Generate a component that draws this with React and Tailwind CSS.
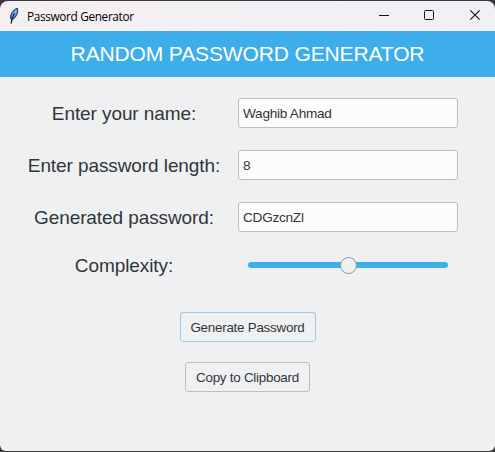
import React from "react";

function Feather() {
  return (
    <svg width="16" height="18" viewBox="0 0 16 18" className="block">
      <path d="M4.6 11.5C4 7.5 6.8 2.8 11.4 1.2C12.4 5 11 9.8 6.2 12.8Z" fill="#4a90dc" stroke="#17202c" strokeWidth="0.9" />
      <path d="M6.8 9.5L10.2 3.4" stroke="#7fb8f2" strokeWidth="1.8" fill="none" />
      <path d="M8.4 6.5C6.4 10 5.3 12.5 5.1 16.8" stroke="#0b0d10" strokeWidth="1.1" fill="none" />
    </svg>
  );
}

function TitleBar() {
  return (
    <div className="flex h-[30px] shrink-0 items-center rounded-t-lg bg-gradient-to-r from-[#f4f0f2] to-[#f2f0f7] pl-[6px]">
      <Feather />
      <span className="ml-[5px] font-['Open_Sans',sans-serif] text-[11.8px] leading-4 tracking-[-0.34px] whitespace-nowrap text-black">
        Password Generator
      </span>
      <svg width="102" height="12" viewBox="0 0 102 12" className="mr-[14px] mb-[2px] ml-auto block" fill="none" stroke="#111">
        <path d="M0 6.5H10" shapeRendering="crispEdges" />
        <rect x="45.5" y="1.5" width="9" height="9" rx="1" />
        <path d="M91.3 1.3L100.7 10.7M100.7 1.3L91.3 10.7" strokeWidth="1.1" />
      </svg>
    </div>
  );
}

function Label({ children }) {
  return (
    <div className="pt-px text-center text-[19px] leading-[30px] tracking-[-0.09px] whitespace-nowrap text-[#31363b]">
      {children}
    </div>
  );
}

function Entry({ value }) {
  return (
    <input
      readOnly
      value={value}
      className="h-[30px] w-[220px] rounded-[3px] border border-[#bcbebf] bg-[#fcfcfc] px-1 text-[13.6px] tracking-[-0.25px] text-[#31363b] outline-none"
    />
  );
}

function Slider() {
  return (
    <div className="grid h-[18px] w-[200px] place-items-center justify-self-center">
      <div className="col-start-1 row-start-1 h-[6px] w-full rounded-full bg-[#3daee9]" />
      <div className="col-start-1 row-start-1 h-[17px] w-[17px] rounded-full border border-[#929698] bg-[#eff0f1]" />
    </div>
  );
}

export default function App() {
  return (
    <div className="flex h-[452px] w-[495px] flex-col overflow-hidden bg-[#3c383b] pt-px pb-px font-['Liberation_Sans',Arial,sans-serif]">
      <TitleBar />
      <div className="h-[46px] shrink-0 bg-[#3daeea] text-center text-[21px] leading-[46px] tracking-[-0.13px] whitespace-nowrap text-white">
        RANDOM PASSWORD GENERATOR
      </div>
      <div className="flex grow flex-col rounded-b-md bg-[#eff0f1] pt-[21px]">
        <div className="ml-[19px] grid grid-cols-[210px_220px] grid-rows-[30px_22px_30px_22px_30px_18px_30px] items-center gap-x-[9px]">
          <Label>Enter your name:</Label>
          <Entry value="Waghib Ahmad" />
          <div className="col-span-2 h-[22px]" />
          <Label>Enter password length:</Label>
          <Entry value="8" />
          <div className="col-span-2 h-[22px]" />
          <Label>Generated password:</Label>
          <Entry value="CDGzcnZl" />
          <div className="col-span-2 h-[18px]" />
          <Label>Complexity:</Label>
          <Slider />
        </div>
        <div className="mt-[32px] flex flex-col items-center gap-5">
          <button className="h-[30px] w-[136px] rounded-[3px] border border-[#93cee9] pt-[2px] text-[13.4px] leading-[26px] tracking-[-0.25px] whitespace-nowrap text-[#31363b]">
            Generate Password
          </button>
          <button className="h-[30px] w-[125px] rounded-[3px] border border-[#bcbebf] pt-[2px] text-[13.4px] leading-[26px] tracking-[-0.25px] whitespace-nowrap text-[#31363b]">
            Copy to Clipboard
          </button>
        </div>
      </div>
    </div>
  );
}
